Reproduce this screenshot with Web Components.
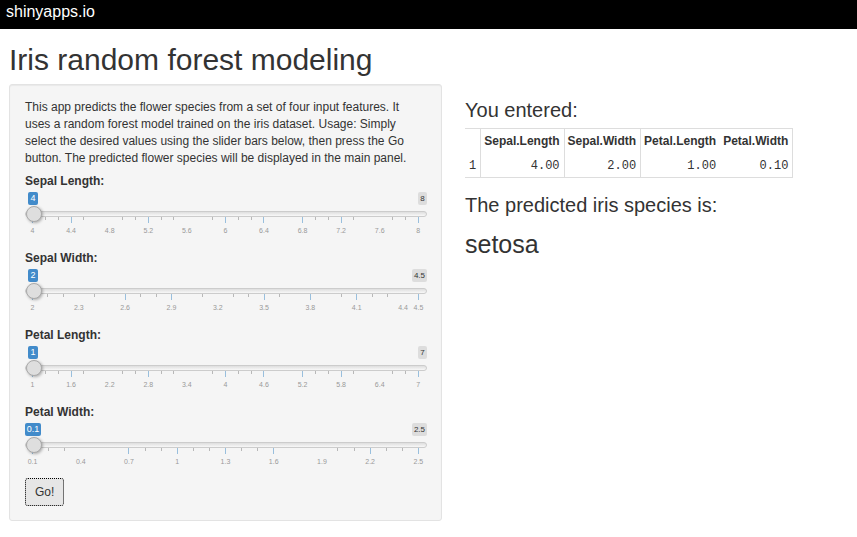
<!DOCTYPE html>
<html lang="en">
<head>
<meta charset="utf-8">
<title>Iris random forest modeling</title>
<style>
  body { margin: 0; background: #fff; color: #333; font: 12px/17px "Liberation Sans", Arial, sans-serif; }
</style>
</head>
<body>
<iris-app></iris-app>

<script>
class TopBar extends HTMLElement {
  constructor() {
    super();
    this.attachShadow({ mode: "open" }).innerHTML = `
      <style>
        :host { display: block; background: #000; color: #fff; font-size: 16px; line-height: 24px; padding: 0 6px 5px; }
      </style>
      <slot></slot>`;
  }
}
customElements.define("top-bar", TopBar);

class WellPanel extends HTMLElement {
  constructor() {
    super();
    this.attachShadow({ mode: "open" }).innerHTML = `
      <style>
        :host { display: block; box-sizing: border-box; padding: 14px 14px 14px 15px; background: #f5f5f5;
                border: 1px solid #e3e3e3; border-radius: 3px; box-shadow: inset 0 1px 1px rgba(0,0,0,.05); }
      </style>
      <slot></slot>`;
  }
}
customElements.define("well-panel", WellPanel);

/* Range slider with value bubbles and a labelled ruler.
   steps: ruler divisions; skip: divisions without a mark; every third division is a major one. */
class RangeSlider extends HTMLElement {
  constructor() {
    super();
    this.attachShadow({ mode: "open" });
  }
  connectedCallback() {
    const a = n => this.getAttribute(n);
    const steps = Number(a("steps"));
    const skip = new Set(a("skip").split(",").map(Number));
    const labels = a("labels").split(",");
    let marks = "";
    for (let i = 0; i <= steps; i++) {
      const last = i === steps;
      const major = i % 3 === 0 || last;
      const text = last ? labels[labels.length - 1] : (major ? labels[i / 3] : "");
      const cls = skip.has(i) ? "none" : (major ? "major" : "minor");
      marks += `<li class="${cls}">${text ? `<span>${text}</span>` : ""}</li>`;
    }
    this.shadowRoot.innerHTML = `
      <style>
        :host { display: block; }
        label { display: block; font-weight: bold; line-height: 18px; }
        .bubbles { display: flex; justify-content: space-between; align-items: flex-start; height: 15px; padding-top: 2px; }
        output, .max { box-sizing: border-box; border-radius: 2px; text-align: center; }
        .anchor { width: 16px; display: flex; justify-content: center; }
        output { flex: none; padding: 0 2px; background: #428bca; color: #fff; font-size: 9px; line-height: 13px; }
        .max { min-width: 9px; padding: 0 2px; background: #ddd; color: #333; font-size: 8px; line-height: 13px; }
        input { -webkit-appearance: none; appearance: none; display: block; position: relative; z-index: 1; width: 100%; height: 18px; margin: -2px 0 0; background: none; outline: 0; }
        input::-webkit-slider-runnable-track { box-sizing: border-box; height: 6px; border: 1px solid #ccc; border-radius: 4px;
          background: linear-gradient(#dedede, #f8f8f8); }
        input::-webkit-slider-thumb { -webkit-appearance: none; box-sizing: border-box; width: 16px; height: 16px; margin-top: -6px;
          border: 1px solid #aaa; border-radius: 50%; background: #dedede; box-shadow: 1px 1px 3px rgba(0,0,0,.3); }
        ol { display: flex; justify-content: space-between; list-style: none; margin: -6px 8px 0 7px; padding: 0; height: 23px; }
        li { width: 1px; display: flex; flex-direction: column; align-items: center; }
        li::before { content: ""; flex: none; width: 1px; height: 3px; margin-bottom: 5px; background: #b8b8b8; }
        li.major::before { height: 6px; margin-bottom: 2px; background: #99bfdd; }
        li.none::before { height: 6px; margin-bottom: 2px; background: none; }
        li span { font-size: 7px; line-height: 12px; color: #999; }
      </style>
      <label for="r">${a("label")}</label>
      <div class="bubbles"><div class="anchor"><output for="r">${a("min")}</output></div><span class="max">${a("max")}</span></div>
      <input id="r" type="range" min="${a("min")}" max="${a("max")}" step="0.1" value="${a("min")}">
      <ol>${marks}</ol>`;
    const input = this.shadowRoot.querySelector("input");
    const output = this.shadowRoot.querySelector("output");
    input.addEventListener("input", () => { output.textContent = input.value; });
  }
}
customElements.define("range-slider", RangeSlider);

class GoButton extends HTMLElement {
  constructor() {
    super();
    this.attachShadow({ mode: "open" }).innerHTML = `
      <style>
        :host { display: block; }
        button { display: block; font: inherit; color: #333; padding: 5px 9px 4px; border: 1px dotted #000; border-radius: 3px; background: #e6e6e6; outline: 0; }
      </style>
      <button type="button"><slot></slot></button>`;
  }
}
customElements.define("go-button", GoButton);

class EnteredTable extends HTMLElement {
  constructor() {
    super();
    this.attachShadow({ mode: "open" }).innerHTML = `
      <style>
        :host { display: block; }
        table { border-collapse: collapse; border: 1px solid #ddd; border-left: 0; }
        th, td { padding: 4px 4px 4px 3px; text-align: right; line-height: 16px; border-right: 1px solid #ddd; }
        td { padding-top: 5px; padding-bottom: 3px; }
        th:first-child, td:first-child { padding-left: 4px; }
        td { font-family: "Liberation Mono", "Courier New", monospace; }
        th:nth-child(4), td:nth-child(4) { border-right: 0; }
      </style>
      <table>
        <thead><tr><th></th><th>Sepal.Length</th><th>Sepal.Width</th><th>Petal.Length</th><th>Petal.Width</th></tr></thead>
        <tbody><tr><td>1</td><td>4.00</td><td>2.00</td><td>1.00</td><td>0.10</td></tr></tbody>
      </table>`;
  }
}
customElements.define("entered-table", EnteredTable);

class IrisApp extends HTMLElement {
  constructor() {
    super();
    this.attachShadow({ mode: "open" }).innerHTML = `
      <style>
        :host { display: block; }
        h1, h2, h3, p { margin: 0; }
        h1, h2, h3 { font-weight: normal; }
        h1 { font-size: 30px; line-height: 34px; padding: 14px 9px 7px; }
        .row { display: grid; grid-template-columns: 433fr 383fr; gap: 23px; padding: 0 9px 16px; align-items: start; }
        .intro { padding-bottom: 5px; }
        .sliders { display: grid; gap: 9px; padding-bottom: 7px; }
        main { padding-top: 14px; }
        h2 { font-size: 20px; line-height: 24px; }
        entered-table { margin: 6px 0 15px; }
        h3 { font-size: 25px; line-height: 30px; margin-top: 12px; }
      </style>
      <top-bar>shinyapps.io</top-bar>
      <h1>Iris random forest modeling</h1>
      <div class="row">
        <well-panel>
          <p class="intro">This app predicts the flower species from a set of four input features. It uses a random forest model trained on the iris dataset. Usage: Simply select the desired values using the slider bars below, then press the Go button. The predicted flower species will be displayed in the main panel.</p>
          <div class="sliders">
            <range-slider label="Sepal Length:" min="4" max="8" steps="30" skip="5,6,12,13,19,20,26,27" labels="4,4.4,4.8,5.2,5.6,6,6.4,6.8,7.2,7.6,8"></range-slider>
            <range-slider label="Sepal Width:" min="2" max="4.5" steps="25" skip="3,5,10,12,17,19,24" labels="2,2.3,2.6,2.9,3.2,3.5,3.8,4.1,4.4,4.5"></range-slider>
            <range-slider label="Petal Length:" min="1" max="7" steps="30" skip="5,6,12,13,19,20,26,27" labels="1,1.6,2.2,2.8,3.4,4,4.6,5.2,5.8,6.4,7"></range-slider>
            <range-slider label="Petal Width:" min="0.1" max="2.5" steps="24" skip="3,4,5,16,17,18" labels="0.1,0.4,0.7,1,1.3,1.6,1.9,2.2,2.5"></range-slider>
          </div>
          <go-button>Go!</go-button>
        </well-panel>
        <main>
          <h2>You entered:</h2>
          <entered-table></entered-table>
          <h2>The predicted iris species is:</h2>
          <h3>setosa</h3>
        </main>
      </div>`;
  }
}
customElements.define("iris-app", IrisApp);
</script>
</body>
</html>
